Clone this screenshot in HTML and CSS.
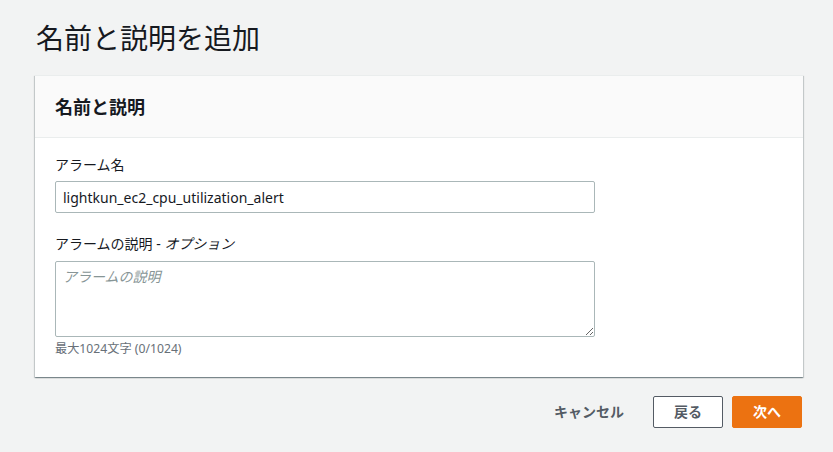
FILE: index.html
```html
<!DOCTYPE html>
<html lang="ja">
<head>
<meta charset="utf-8">
<link rel="stylesheet" href="styles.css">
</head>
<body>
<main class="page">
  <h1 class="page-title">名前と説明を追加</h1>
  <section class="card">
    <header class="card-header">
      <h2 class="card-title">名前と説明</h2>
    </header>
    <div class="card-body">
      <div class="field">
        <label class="field-label" for="name">アラーム名</label>
        <input class="text-input" id="name" type="text" value="lightkun_ec2_cpu_utilization_alert">
      </div>
      <div class="field">
        <label class="field-label" for="desc">アラームの説明 - <i>オプション</i></label>
        <textarea class="text-area" id="desc" placeholder="アラームの説明"></textarea>
        <div class="field-hint">最大1024文字 (0/1024)</div>
      </div>
    </div>
  </section>
  <div class="actions">
    <button class="btn btn-link">キャンセル</button>
    <button class="btn btn-normal">戻る</button>
    <button class="btn btn-primary">次へ</button>
  </div>
</main>
</body>
</html>
```
FILE: styles.css
```css
* { box-sizing: border-box; }
html, body {
  margin: 0;
  padding: 0;
  background: #f2f3f3;
}
body {
  font-family: "Noto Sans", "Noto Sans CJK JP", sans-serif;
  color: #16191f;
  font-size: 14px;
}
.page {
  padding: 20px 30px 0 35px;
}
.page-title {
  margin: 0 0 19px 1px;
  font-size: 28px;
  line-height: 36px;
  font-weight: 400;
  color: #16191f;
}
.card {
  background: #fff;
  border-top: 1px solid #eaeded;
  box-shadow: 0 1px 1px 0 rgba(0, 28, 36, 0.3), 1px 1px 1px 0 rgba(0, 28, 36, 0.15), -1px 1px 1px 0 rgba(0, 28, 36, 0.15);
}
.card-header {
  height: 62px;
  background: #fafafa;
  border-bottom: 1px solid #eaeded;
  padding: 0 20px;
  display: flex;
  align-items: center;
}
.card-title {
  margin: 0;
  font-size: 18px;
  line-height: 22px;
  font-weight: 700;
}
.card-body {
  padding: 16px 20px 20px;
  display: flex;
  flex-direction: column;
  gap: 20px;
}
.field {
  display: flex;
  flex-direction: column;
}
.field-label {
  font-size: 14px;
  line-height: 22px;
  margin-bottom: 5px;
}
.field-label i { font-style: italic; }
.text-input, .text-area {
  width: 540px;
  border: 1px solid #aab7b8;
  border-radius: 2px;
  font-family: "Noto Sans", "Noto Sans CJK JP", sans-serif;
  font-size: 14px;
  color: #16191f;
  padding: 4px 7px;
  background: #fff;
  margin: 0;
}
.text-input {
  height: 32px;
  line-height: 22px;
}
.text-area {
  height: 76px;
  line-height: 22px;
  margin-top: 1px;
  resize: vertical;
}
.text-area::placeholder {
  color: #879596;
  font-style: italic;
}
.field-hint {
  margin-top: 4px;
  font-size: 12.2px;
  line-height: 16px;
  color: #687078;
}
.actions {
  display: flex;
  justify-content: flex-end;
  align-items: center;
  gap: 9px;
  margin-top: 19px;
  margin-right: 1px;
}
.btn {
  height: 32px;
  padding: 0 20px;
  font-family: "Noto Sans", "Noto Sans CJK JP", sans-serif;
  font-size: 14px;
  font-weight: 700;
  line-height: 22px;
  border-radius: 2px;
  cursor: pointer;
}
.btn-link {
  background: transparent;
  border: 1px solid transparent;
  color: #545b64;
  margin-right: -1px;
}
.btn-normal {
  background: #fff;
  border: 1px solid #545b64;
  color: #545b64;
  width: 70px;
}
.btn-primary {
  background: #ec7211;
  border: 1px solid #ec7211;
  color: #fff;
  width: 70px;
}
```
